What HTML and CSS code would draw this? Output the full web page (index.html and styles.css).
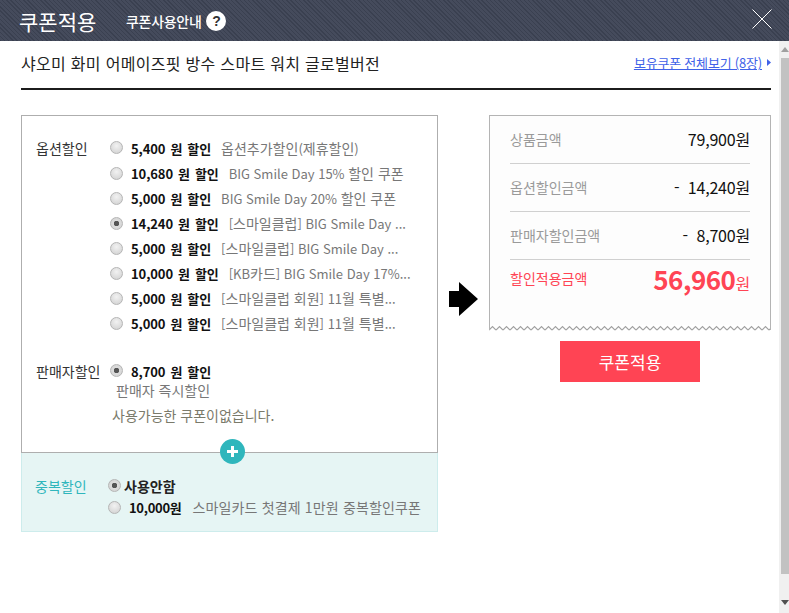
FILE: index.html
```html
<!DOCTYPE html>
<html lang="ko">
<head>
<meta charset="utf-8">
<title>쿠폰적용</title>
<link rel="stylesheet" href="styles.css">
</head>
<body>
<header class="top">
  <h1 class="top-title">쿠폰적용</h1>
  <a class="top-guide">쿠폰사용안내</a>
  <span class="help">?</span>
  <svg class="close" width="20" height="20" viewBox="0 0 20 20"><path d="M.5.5l19 19M19.500.5l-19 19" stroke="#fff" fill="none"/></svg>
</header>
<div class="page">
  <main class="main">
    <div class="title-row">
      <h2 class="product">샤오미 화미 어메이즈핏 방수 스마트 워치 글로벌버전</h2>
      <a class="all">보유쿠폰 전체보기 (8장)</a>
      <svg class="tri" width="4" height="7" viewBox="0 0 4 7"><path d="M0 0l4 3.500-4 3.500z" fill="#3f62e8"/></svg>
    </div>
    <div class="columns">
      <section class="left">
        <div class="box">
          <div class="group options">
            <div class="label">옵션할인</div>
            <div class="list">
              <div class="row"><input class="radio" type="radio" name="o"><b class="amt">5,400 원 할인</b><span class="desc">옵션추가할인<span class="en">(</span>제휴할인<span class="en">)</span></span></div>
              <div class="row"><input class="radio" type="radio" name="o"><b class="amt">10,680 원 할인</b><span class="desc"><span class="en">BIG Smile Day 15% </span>할인 쿠폰</span></div>
              <div class="row"><input class="radio" type="radio" name="o"><b class="amt">5,000 원 할인</b><span class="desc"><span class="en">BIG Smile Day 20% </span>할인 쿠폰</span></div>
              <div class="row"><input class="radio" type="radio" name="o" checked><b class="amt">14,240 원 할인</b><span class="desc"><span class="en">[</span>스마일클럽<span class="en">] BIG Smile Day ...</span></span></div>
              <div class="row"><input class="radio" type="radio" name="o"><b class="amt">5,000 원 할인</b><span class="desc"><span class="en">[</span>스마일클럽<span class="en">] BIG Smile Day ...</span></span></div>
              <div class="row"><input class="radio" type="radio" name="o"><b class="amt">10,000 원 할인</b><span class="desc"><span class="en">[KB</span>카드<span class="en">] BIG Smile Day 17%...</span></span></div>
              <div class="row"><input class="radio" type="radio" name="o"><b class="amt">5,000 원 할인</b><span class="desc"><span class="en">[</span>스마일클럽 회원<span class="en">] 11</span>월 특별<span class="en">...</span></span></div>
              <div class="row"><input class="radio" type="radio" name="o"><b class="amt">5,000 원 할인</b><span class="desc"><span class="en">[</span>스마일클럽 회원<span class="en">] 11</span>월 특별<span class="en">...</span></span></div>
            </div>
          </div>
          <div class="group seller">
            <div class="label">판매자할인</div>
            <div class="list">
              <div class="row row-seller"><input class="radio" type="radio" name="s" checked><b class="amt">8,700 원 할인</b></div>
              <div class="sub">판매자 즉시할인</div>
              <div class="none">사용가능한 쿠폰이없습니다.</div>
            </div>
          </div>
          <span class="plus"><svg width="11" height="11" viewBox="0 0 11 11"><path d="M4 0h3v4h4v3H7v4H4V7H0V4h4z" fill="#fff"/></svg></span>
        </div>
        <div class="dup">
          <div class="dup-label">중복할인</div>
          <div class="dup-list">
            <div class="dup-row"><input class="radio" type="radio" name="d" checked><b class="dup-none">사용안함</b></div>
            <div class="dup-row"><input class="radio" type="radio" name="d"><b class="dup-amt">10,000원</b><span class="desc dup-desc">스마일카드 첫결제 1만원 중복할인쿠폰</span></div>
          </div>
        </div>
      </section>
      <svg class="arrow" width="30" height="34" viewBox="0 0 30 34"><path d="M0 9h10V0l19 17-19 17v-9H0z" fill="#000"/></svg>
      <section class="right">
        <div class="receipt">
          <div class="line"><span class="k">상품금액</span><span class="v">79,900원</span></div>
          <div class="line"><span class="k">옵션할인금액</span><span class="v">-&nbsp; 14,240원</span></div>
          <div class="line"><span class="k">판매자할인금액</span><span class="v">-&nbsp; 8,700원</span></div>
          <div class="line total"><span class="k">할인적용금액</span><span class="v"><strong class="big">56,960</strong>원</span></div>
        </div>
        <svg class="zig" width="282" height="6" viewBox="0 0 282 6">
          <defs>
            <pattern id="teeth" width="7" height="6" patternUnits="userSpaceOnUse">
              <path d="M0 5L3.500 1.500 7 5" fill="none" stroke="#a0a0a0" stroke-width="1.200"/>
            </pattern>
          </defs>
          <rect width="282" height="6" fill="url(#teeth)"/>
          <path d="M.5 0v5M281.500 0v5" stroke="#b4b4b4"/>
        </svg>
        <button class="apply" type="button">쿠폰적용</button>
      </section>
    </div>
  </main>
  <div class="scrollbar">
    <svg class="sb-arrow" width="8" height="5" viewBox="0 0 8 5"><path d="M4 0l4 5H0z" fill="#a0a0a0"/></svg>
    <div class="thumb"></div>
    <svg class="sb-arrow" width="8" height="5" viewBox="0 0 8 5"><path d="M4 5L0 0h8z" fill="#505050"/></svg>
  </div>
</div>
</body>
</html>
```
FILE: styles.css
```css
* { box-sizing: border-box; }
html, body { margin: 0; height: 100%; overflow: hidden; }
body {
  background: #fff;
  color: #000;
  font-family: "Noto Sans CJK KR", "Noto Sans", sans-serif;
  font-size: 14px;
  display: flex;
  flex-direction: column;
}
h1, h2 { margin: 0; font-weight: 400; }

.top {
  flex: none;
  height: 41px;
  display: flex;
  align-items: center;
  padding-left: 19px;
  padding-right: 17px;
  color: #fff;
  background: repeating-linear-gradient(45deg, #3a4050 0, #3a4050 1px, #454b5c 1px, #454b5c 3px);
}
.top-title { font-size: 21px; line-height: 34px; width: 107px; }
.top-guide { font-size: 14px; font-weight: 500; letter-spacing: -.3px; }
.help {
  width: 20px; height: 20px; border-radius: 50%; background: #fff; color: #333;
  font: 700 14px/20px "Liberation Sans", sans-serif; text-align: center; margin-left: 5px;
}
.close { margin-left: auto; margin-top: -4px; }

.page { flex: 1; display: flex; min-height: 0; }
.main { flex: 1; min-width: 0; padding: 0 8px 0 21px; }
.title-row {
  height: 49px;
  border-bottom: 2px solid #1c1c1c;
  display: flex;
  align-items: center;
  padding-bottom: 4px;
}
.product { font-size: 16px; line-height: 22px; letter-spacing: .3px; color: #222; flex: 1; }
.all { font-size: 13px; color: #3f62e8; text-decoration: underline; letter-spacing: -.2px; }
.tri { margin-left: 5px; }

.columns { display: flex; align-items: flex-start; margin-top: 25px; }
.left { width: 417px; flex: none; }
.box {
  position: relative;
  height: 338px;
  border: 1px solid #aeaeae;
  padding: 20px 0 0 14px;
}
.group { display: flex; }
.label { width: 74px; flex: none; color: #333; line-height: 25px; }
.row { display: flex; align-items: center; height: 25px; white-space: nowrap; }
.radio {
  appearance: none;
  width: 13px; height: 13px; margin: 0 8px 0 0; flex: none;
  border-radius: 50%;
  border: 1px solid #b5b5b5;
  background: radial-gradient(circle at 50% 35%, #f2f2f2, #cfcfcf);
}
.radio:checked { background: radial-gradient(circle, #555 0, #555 2.500px, #ddd 3px, #d0d0d0 100%); }
.row:first-child .radio { margin-top: -3px; }
.amt { font-size: 13px; line-height: 16px; font-weight: 700; color: #111; letter-spacing: -.1px; word-spacing: 1.500px; margin-right: 10px; }
.desc { font-size: 14px; line-height: 17px; color: #777; }
.en { font-size: 13px; }
.seller { margin-top: 23px; }
.row-seller { height: 20px; margin-top: 2.500px; }
.sub { color: #777; margin: 0 0 0 6px; line-height: 17px; }
.none { color: #7a7a6a; margin: 8px 0 0 2px; line-height: 17px; }
.plus {
  position: absolute;
  left: 198px; top: 323px;
  width: 25px; height: 25px; border-radius: 50%;
  background: #2fb6bc;
  display: flex; align-items: center; justify-content: center;
}
.dup {
  height: 79px;
  background: #e6f5f4;
  border: 1px solid #cdecec;
  border-top: 0;
  display: flex;
  padding: 22px 0 0 13px;
}
.dup-label { width: 73px; flex: none; color: #2fb6bc; line-height: 22px; }
.dup-row { display: flex; align-items: center; height: 22px; white-space: nowrap; }
.dup-row:first-child { height: 21px; }
.dup-row .radio { margin: 0 3px 0 0; }
.dup-none { color: #222; }
.dup-amt { font-size: 13px; color: #111; margin-left: 5px; margin-right: 11px; letter-spacing: -.3px; }
.dup-desc { letter-spacing: .15px; }

.arrow { flex: none; margin: 167px 0 0 11px; }
.right { width: 282px; flex: none; margin-left: 10px; display: flex; flex-direction: column; align-items: center; }
.receipt {
  width: 100%;
  height: 210px;
  border: 1px solid #b4b4b4;
  border-bottom: 0;
  background: #fdfdfd;
  padding: 0 20px;
}
.line {
  height: 48px;
  padding-bottom: 2px;
  display: flex; justify-content: space-between; align-items: center;
  border-bottom: 1px solid #d0d0d0;
}
.line.total { border-bottom: 0; padding-bottom: 12px; }
.k { color: #9a9a9a; }
.v { font-size: 16px; color: #111; letter-spacing: -.2px; }
.total .k, .total .v { color: #ff4454; }
.big { font-size: 26px; font-weight: 700; letter-spacing: -.5px; }
.zig { display: block; }
.apply {
  width: 140px; height: 41px; margin-top: 10px;
  border: 0; background: #ff4454; color: #fff;
  font-family: inherit; font-size: 17px; font-weight: 400;
}
.scrollbar {
  flex: none; width: 10px;
  background: #f0f0f0;
  display: flex; flex-direction: column; align-items: flex-end;
  padding: 6px 0 8px 2px;
}
.sb-arrow { flex: none; }
.thumb { width: 8px; flex: 1; background: #c2c2c2; margin: 6px 0 26px; }
```
